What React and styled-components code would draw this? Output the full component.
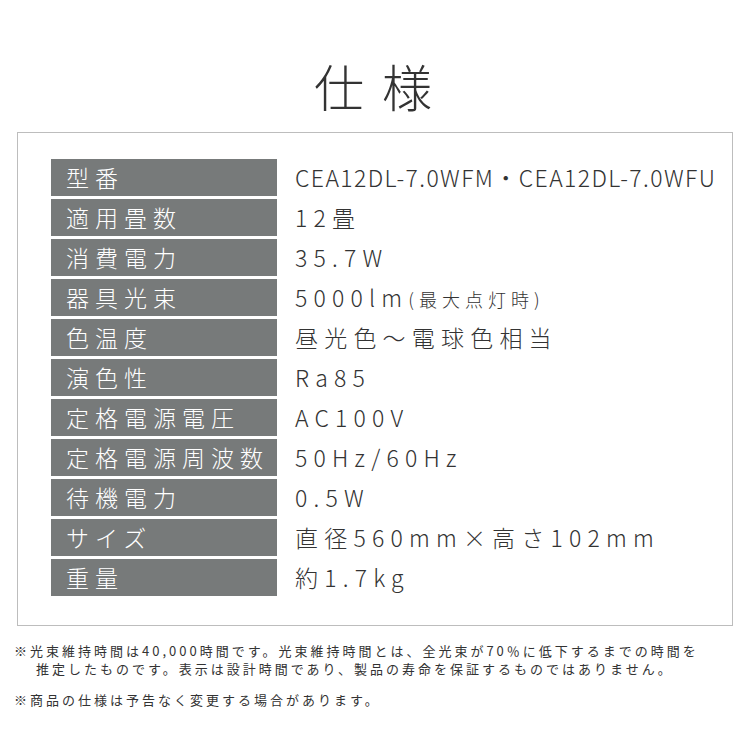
import React from "react";
import styled, { createGlobalStyle } from "styled-components";

const GlobalStyle = createGlobalStyle`
  html, body {
    margin: 0;
    padding: 0;
    background: #ffffff;
  }
  body {
    font-family: "Noto Sans CJK JP", "Noto Sans", sans-serif;
    color: #333333;
  }
`;

const Page = styled.div`
  width: 750px;
  height: 750px;
  box-sizing: border-box;
  padding-top: 56px;
  display: flex;
  flex-direction: column;
`;

const Title = styled.h1`
  margin: 0;
  height: 58px;
  text-align: center;
  font-size: 50px;
  line-height: 58px;
  font-weight: 300;
  letter-spacing: 18px;
  text-indent: 14px;
  color: #333;
`;

const SpecBox = styled.section`
  margin: 18px 0 0 17px;
  width: 716px;
  height: 494px;
  box-sizing: border-box;
  border: 1px solid #bdbdbd;
  padding: 26px 0 0 33px;
`;

const SpecTable = styled.div`
  display: grid;
  grid-template-columns: 226px 1fr;
  grid-auto-rows: 37px;
  row-gap: 3px;
  column-gap: 18px;
`;

const Label = styled.div`
  background: #777a7a;
  color: #ffffff;
  font-size: 23px;
  font-weight: 300;
  letter-spacing: 6px;
  line-height: 37px;
  padding-left: 15px;
  white-space: nowrap;
`;

const Value = styled.div`
  color: #333;
  font-size: 23px;
  font-weight: 300;
  letter-spacing: ${(p) => (p.$tight ? "1.4px" : "6.2px")};
  line-height: 37px;
  white-space: nowrap;
`;

const Small = styled.span`
  font-size: 18px;
  letter-spacing: 5px;
`;

const Notes = styled.div`
  margin: 16px 0 0 14px;
  font-size: 13px;
  letter-spacing: 3px;
  line-height: 18px;
  color: #333;
`;

const NoteLine = styled.p`
  margin: 0;
  padding-left: ${(p) => (p.$indent ? "22px" : "0")};
  margin-top: ${(p) => (p.$gap ? "13px" : "0")};
  white-space: nowrap;
`;

const specs = [
  ["型番", "CEA12DL-7.0WFM・CEA12DL-7.0WFU", true],
  ["適用畳数", "12畳"],
  ["消費電力", "35.7W"],
  ["器具光束", <>5000lm<Small>(最大点灯時)</Small></>],
  ["色温度", "昼光色～電球色相当"],
  ["演色性", "Ra85"],
  ["定格電源電圧", "AC100V"],
  ["定格電源周波数", "50Hz/60Hz"],
  ["待機電力", "0.5W"],
  ["サイズ", "直径560mm×高さ102mm"],
  ["重量", "約1.7kg"],
];

export default function App() {
  return (
    <>
      <GlobalStyle />
      <Page>
        <Title>仕様</Title>
        <SpecBox>
          <SpecTable>
            {specs.map(([label, value, tight]) => (
              <React.Fragment key={label}>
                <Label>{label}</Label>
                <Value $tight={tight}>{value}</Value>
              </React.Fragment>
            ))}
          </SpecTable>
        </SpecBox>
        <Notes>
          <NoteLine>※光束維持時間は40,000時間です。光束維持時間とは、全光束が70％に低下するまでの時間を</NoteLine>
          <NoteLine $indent>推定したものです。表示は設計時間であり、製品の寿命を保証するものではありません。</NoteLine>
          <NoteLine $gap>※商品の仕様は予告なく変更する場合があります。</NoteLine>
        </Notes>
      </Page>
    </>
  );
}
